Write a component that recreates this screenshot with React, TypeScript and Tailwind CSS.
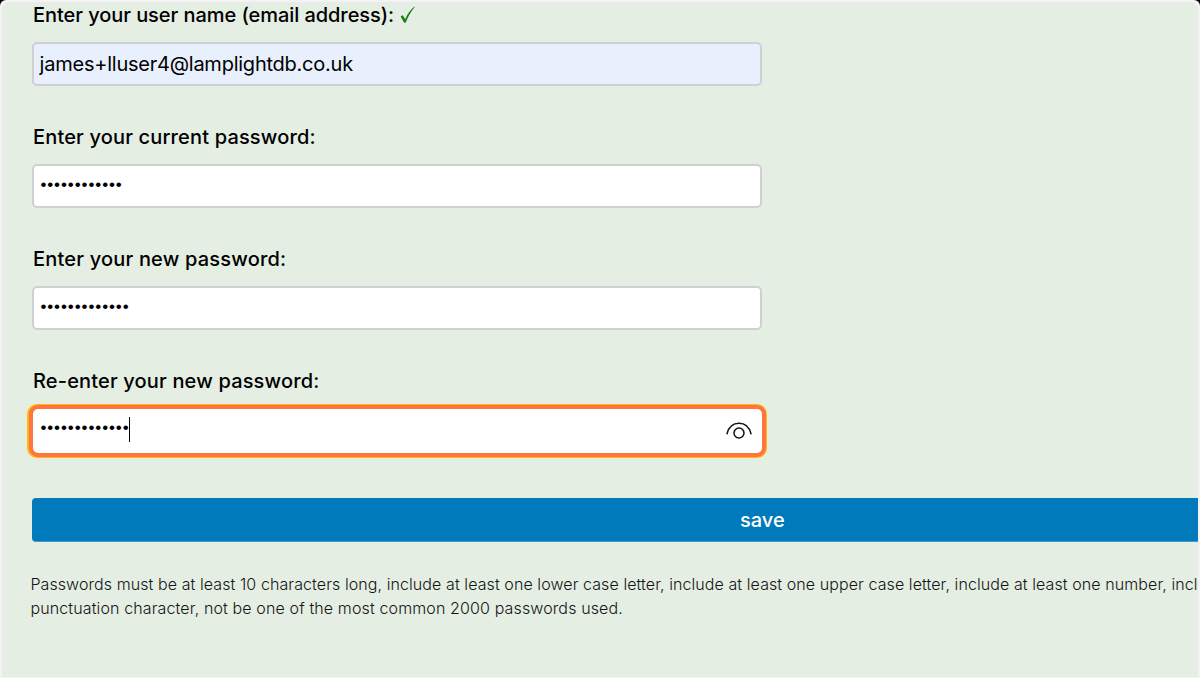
import type { ReactNode } from "react";

function Label({ children, spacing }: { children: ReactNode; spacing: string }) {
  return (
    <label className={`flex h-[27px] items-start pl-[0.6px] whitespace-nowrap text-[20px] leading-[27px] font-medium text-black ${spacing}`}>
      {children}
    </label>
  );
}

function Dots({ count }: { count: number }) {
  return (
    <span className="mb-[3px] h-[18px] whitespace-nowrap font-['Liberation_Sans',sans-serif] text-[17px] leading-[18px] tracking-[0.91px]">
      {"•".repeat(count)}
    </span>
  );
}

const box = "flex h-11 w-[730px] items-center rounded-[5px] border-2 border-[#d0cfd2] px-[6px]";

export default function App() {
  return (
    <div className="h-[678px] w-[1200px] overflow-hidden bg-black font-[Inter,sans-serif] text-black">
      <div className="h-full overflow-hidden rounded-t-[6px] bg-[#f4f1f7] px-[2px] pt-[2px] pb-px">
        <main className="h-full overflow-hidden rounded-t-[8px] bg-[#e4eee3]">
          <form className="flex w-[1460px] flex-col pl-[30.4px]">
            <div className="h-[122px]">
              <Label spacing="tracking-[-0.06px]">
                <span>Enter your user name (email address):</span>
                <svg className="mt-[4px] ml-[6px] h-[18px] w-[15px]" viewBox="0 0 15 18" aria-label="valid">
                  <path d="M.7 10.4 2.8 9.2 5.2 13.2C7.2 8.5 10 4.3 14.1.7L14.6 1.2C11 5.5 8 10.5 5.8 16.6L4.1 16.8Z" fill="#178017" />
                </svg>
              </Label>
              <div className={`${box} mt-[13px] bg-[#e8f0fe]`}>
                <span className="-ml-[0.8px] text-[20px] leading-6 tracking-[-0.24px]">james+lluser4@lamplightdb.co.uk</span>
              </div>
            </div>
            <div className="h-[122px]">
              <Label spacing="tracking-[0.16px]">Enter your current password:</Label>
              <div className={`${box} mt-[13px] bg-white`}><Dots count={12} /></div>
            </div>
            <div className="h-[122px]">
              <Label spacing="tracking-[0.19px]">Enter your new password:</Label>
              <div className={`${box} mt-[13px] bg-white`}><Dots count={13} /></div>
            </div>
            <div className="h-[130px]">
              <Label spacing="tracking-[0.16px]">Re-enter your new password:</Label>
              <div className="mt-[9px] -ml-[5px] h-[54px] w-[740px] rounded-[10px] bg-[#ffb80c] p-[1.4px]">
                <div className="flex h-full items-center rounded-[9px] border-4 border-[#ff7542] bg-white pl-[7.6px] pr-[8.6px]">
                  <span className="mb-[3px] flex items-center">
                    <Dots count={13} />
                    <span className="-ml-px h-[25px] w-px bg-black" />
                  </span>
                  <svg className="ml-auto h-5 w-[28px]" viewBox="0 0 28 20" fill="none" stroke="#111" strokeWidth="1.5" aria-label="Show password">
                    <path d="M2 12.7C3.7 6.3 8.2 2.3 14 2.3S24.3 6.3 26 12.7" strokeLinecap="round" />
                    <circle cx="14" cy="12" r="5" />
                  </svg>
                </div>
              </div>
            </div>
            <button type="button" className="h-11 w-[1460px] rounded-[4px] border-b border-[#4298cc] bg-[#007aba] text-center text-[20px] leading-[42px] font-medium text-white">
              save
            </button>
            <p className="mt-[30px] -ml-[2px] text-[16px] leading-6 font-light whitespace-nowrap text-[#151515]">
              <span className="tracking-[0.084px]">Passwords must be at least 10 characters long, include at least one lower case letter, include at least one upper case letter, include at least one number, incl</span>
              <br />
              <span className="tracking-[0.125px]">punctuation character, not be one of the most common 2000 passwords used.</span>
            </p>
          </form>
        </main>
      </div>
    </div>
  );
}
